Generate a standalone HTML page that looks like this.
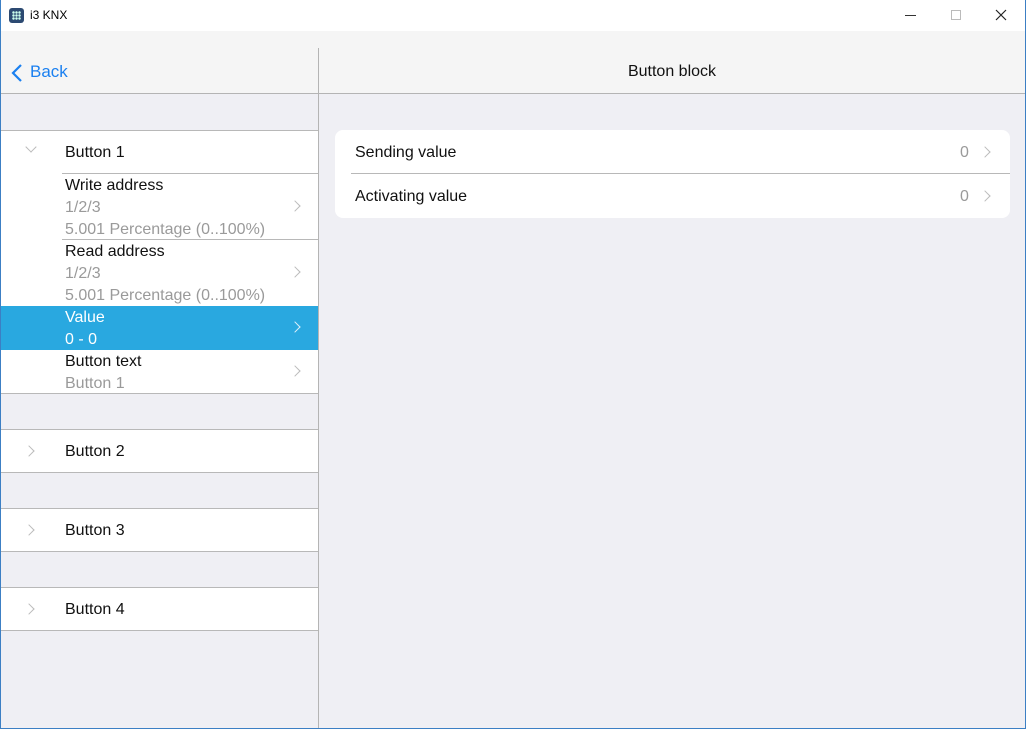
<!DOCTYPE html>
<html><head><meta charset="utf-8"><style>
*{margin:0;padding:0;box-sizing:border-box}
body{width:1026px;height:729px;overflow:hidden;font-family:"Liberation Sans",sans-serif;background:#fff;position:relative}
.win{position:absolute;left:0;top:0;width:1026px;height:729px;border:1px solid #3c7fc4;border-top:none}
.title{position:absolute;left:0;top:0;width:1026px;height:31px;background:#fff}
.abs{position:absolute}
.hdr{position:absolute;left:1px;top:31px;width:1024px;height:63px;background:#f5f5f5;border-bottom:1px solid #b4b4b4}
.left{position:absolute;left:1px;top:94px;width:318px;height:634px;background:#efeff4;border-right:1px solid #b4b4b4}
.right{position:absolute;left:319px;top:94px;width:706px;height:634px;background:#efeff4}
.row{position:absolute;left:0;width:317px;background:#fff}
.t{position:absolute;font-size:16px;color:#111}
.g{color:#9a9a9a}
.chev{position:absolute;width:8px;height:8px;border-top:1.3px solid #bbb;border-right:1.3px solid #bbb;transform:rotate(45deg)}
.line{position:absolute;height:1px;background:#b8b8b8}
</style></head><body>
<div class="title">
 <div class="abs" style="left:9px;top:8px;width:15px;height:15px;background:#2c4a72;border-radius:3px"></div>
 <div class="abs" style="left:12px;top:11px;width:9px;height:9px;background:radial-gradient(circle,#cfe 1px,transparent 1.5px) 0 0/3px 3px"></div>
 <div class="abs" style="left:30px;top:8px;font-size:12px;color:#000">i3 KNX</div>
 <div class="abs" style="left:905px;top:15px;width:11px;height:1px;background:#333"></div>
 <div class="abs" style="left:951px;top:10px;width:10px;height:10px;border:1px solid #bbb"></div>
 <svg class="abs" style="left:995px;top:9px" width="12" height="12"><path d="M1 1L11 11M11 1L1 11" stroke="#222" stroke-width="1.2"/></svg>
</div>
<div class="hdr">
 <div class="abs" style="left:317px;top:17px;width:1px;height:46px;background:#b4b4b4"></div>
 <svg class="abs" style="left:10px;top:32px" width="12" height="20"><path d="M10 2L2 10L10 18" stroke="#1b80f0" stroke-width="2.2" fill="none"/></svg>
 <div class="abs" style="left:29px;top:31px;font-size:17px;color:#1b80f0">Back</div>
 <div class="abs" style="left:318px;width:706px;top:32px;text-align:center;font-size:16px;color:#111">Button block</div>
</div>
<div class="left">
 <div class="row" style="top:36px;height:44px;border-top:1px solid #b8b8b8">
  <div class="chev" style="left:26px;top:12px;transform:rotate(135deg)"></div>
  <div class="t" style="left:64px;top:13px">Button 1</div>
 </div>
 <div class="row" style="top:80px;height:66px">
  <div class="t" style="left:64px;top:3px">Write address</div>
  <div class="t g" style="left:64px;top:25px">1/2/3</div>
  <div class="t g" style="left:64px;top:47px">5.001 Percentage (0..100%)</div>
  <div class="chev" style="left:290px;top:28px"></div>
 </div>
 <div class="row" style="top:146px;height:66px">
  <div class="t" style="left:64px;top:3px">Read address</div>
  <div class="t g" style="left:64px;top:25px">1/2/3</div>
  <div class="t g" style="left:64px;top:47px">5.001 Percentage (0..100%)</div>
  <div class="chev" style="left:290px;top:28px"></div>
 </div>
 <div class="line" style="left:61px;top:79px;width:256px"></div>
 <div class="line" style="left:61px;top:145px;width:256px"></div>
 <div class="row" style="top:212px;height:44px;background:#29a8e0">
  <div class="t" style="left:64px;top:3px;color:#fff">Value</div>
  <div class="t" style="left:64px;top:25px;color:#fff">0 - 0</div>
  <div class="chev" style="left:290px;top:17px;border-color:#e0f0fa"></div>
 </div>
 <div class="row" style="top:256px;height:44px;border-bottom:1px solid #b8b8b8">
  <div class="t" style="left:64px;top:3px">Button text</div>
  <div class="t g" style="left:64px;top:25px">Button 1</div>
  <div class="chev" style="left:290px;top:17px"></div>
 </div>
 <div class="row" style="top:335px;height:44px;border-top:1px solid #b8b8b8;border-bottom:1px solid #b8b8b8">
  <div class="chev" style="left:24px;top:17px"></div><div class="t" style="left:64px;top:13px">Button 2</div></div>
 <div class="row" style="top:414px;height:44px;border-top:1px solid #b8b8b8;border-bottom:1px solid #b8b8b8">
  <div class="chev" style="left:24px;top:17px"></div><div class="t" style="left:64px;top:13px">Button 3</div></div>
 <div class="row" style="top:493px;height:44px;border-top:1px solid #b8b8b8;border-bottom:1px solid #b8b8b8">
  <div class="chev" style="left:24px;top:17px"></div><div class="t" style="left:64px;top:13px">Button 4</div></div>
</div>
<div class="right">
 <div class="abs" style="left:16px;top:36px;width:675px;height:88px;background:#fff;border-radius:8px">
  <div class="t" style="left:20px;top:14px">Sending value</div>
  <div class="t g" style="left:625px;top:14px">0</div>
  <div class="chev" style="left:646px;top:18px"></div>
  <div class="line" style="left:16px;top:43px;width:659px"></div>
  <div class="t" style="left:20px;top:58px">Activating value</div>
  <div class="t g" style="left:625px;top:58px">0</div>
  <div class="chev" style="left:646px;top:62px"></div>
 </div>
</div>
<div class="win"></div>
</body></html>
